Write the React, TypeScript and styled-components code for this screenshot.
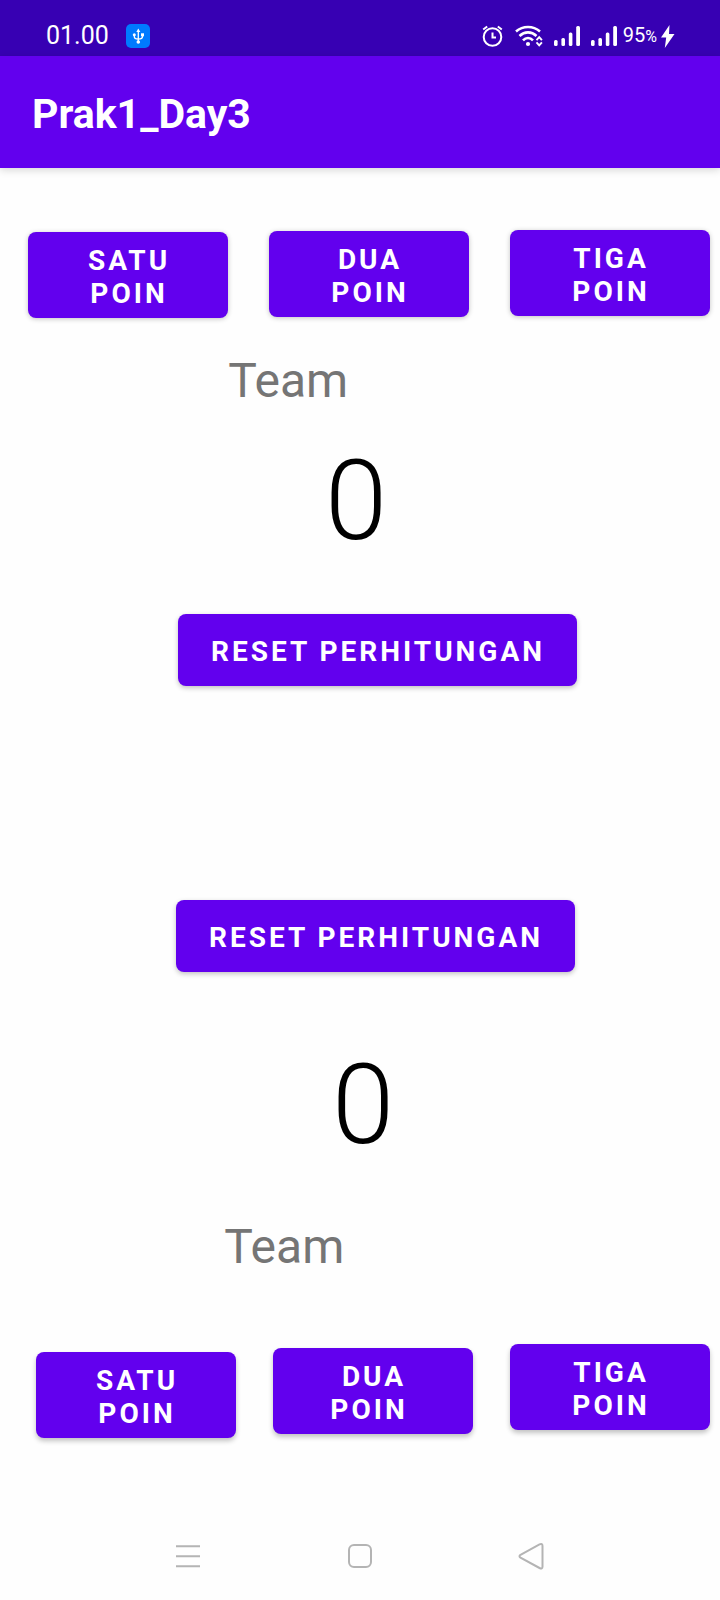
import React, { useState } from "react";
import styled, { createGlobalStyle } from "styled-components";

const GlobalStyle = createGlobalStyle`
  *, *::before, *::after { box-sizing: border-box; }
  body {
    margin: 0;
    background: #fefefe;
    font-family: Roboto, "Noto Sans", sans-serif;
  }
`;

const Screen = styled.div`
  display: flex;
  flex-direction: column;
  min-height: 100vh;
`;

const StatusBar = styled.header`
  display: flex;
  justify-content: space-between;
  align-items: center;
  height: 56px;
  padding: 16px 45px 0 46px;
  background: #3700b3;
  color: #fff;
`;

const StatusGroup = styled.div<{ $gap: number }>`
  display: flex;
  align-items: center;
  gap: ${(p) => p.$gap}px;

  svg { display: block; flex: none; }
`;

const Clock = styled.time`
  font-size: 25px;
  line-height: 32px;
`;

const Battery = styled.span`
  font-size: 20px;
  line-height: 24px;

  small { font-size: 16px; }
`;

const AppBar = styled.div`
  display: flex;
  align-items: center;
  height: 112px;
  padding: 4px 32px 0;
  background: #6200ee;
  box-shadow: 0 2px 8px rgba(0, 0, 0, 0.16);
`;

const Title = styled.h1`
  margin: 0;
  color: #fff;
  font-size: 41px;
  font-weight: 700;
  line-height: 48px;
`;

const Main = styled.main`
  flex: 1;
  padding: 62px 0 72px;
`;

const Team = styled.section`
  display: flex;
  flex-direction: column;

  & + & { margin-top: 214px; }
`;

/* Each button starts one step higher than the one to its left. */
const PointRow = styled.div<{ $start: number; $step: number; $top: number }>`
  display: flex;
  justify-content: space-between;
  align-items: flex-start;
  margin-top: ${(p) => p.$top}px;
  padding: 0 10px 0 ${(p) => p.$start}px;

  & > :nth-child(1) { margin-top: ${(p) => p.$step * 2}px; }
  & > :nth-child(2) { margin-top: ${(p) => p.$step}px; }
`;

/* Shares the free width between both sides of its child in a given ratio. */
const Biased = styled.div<{ $before: number; $after: number; $top: number }>`
  display: grid;
  grid-template-columns: ${(p) => p.$before}fr auto ${(p) => p.$after}fr;
  margin-top: ${(p) => p.$top}px;

  & > * { grid-column: 2; }
`;

const Button = styled.button<{ $depth: number }>`
  border: 0;
  border-radius: 8px;
  background: #6200ee;
  color: #fff;
  font-family: inherit;
  font-size: 28px;
  font-weight: 700;
  line-height: 33px;
  letter-spacing: 3px;
  white-space: pre;
  cursor: pointer;
  box-shadow: 0 ${(p) => p.$depth}px 5px rgba(0, 0, 0, 0.24);
`;

const PointButton = styled(Button)`
  flex: 0 1 200px;
  height: 86px;
  padding: 4px 0 0 2px;
`;

const ResetButton = styled(Button)`
  height: 72px;
  padding: 2px 32px 0 33px;
`;

const TeamName = styled.h2`
  margin: 0;
  color: #757575;
  font-size: 48px;
  font-weight: 400;
  line-height: 56px;
`;

const Score = styled.output`
  color: #000;
  font-size: 112px;
  font-weight: 300;
  line-height: 132px;
`;

const NavBar = styled.nav`
  display: flex;
  justify-content: center;
  align-items: center;
  gap: 124px;
  height: 88px;
`;

const NavButton = styled.button`
  display: grid;
  place-items: center;
  width: 48px;
  height: 48px;
  padding: 0;
  border: 0;
  background: none;
  color: #b4b4b4;
  cursor: pointer;

  svg { fill: none; stroke: currentColor; stroke-width: 2; }
`;

const UsbIcon = () => (
  <svg width="24" height="24" viewBox="0 0 24 24" aria-label="USB">
    <rect width="24" height="24" rx="5" fill="#007aff" />
    <path d="M12.300 7v11M8.300 11v1.500q0 2.500 4 2.700M16.500 11v1.500q0 2.500-4.200 2.700" fill="none" stroke="#fff" strokeWidth="1.3" />
    <path d="M12.300 4.500l2 3.500h-4z" fill="#fff" />
    <circle cx="8.300" cy="10.700" r="1.500" fill="#fff" />
    <rect x="15" y="9.300" width="3" height="3" fill="#fff" />
    <circle cx="12.300" cy="18" r="1.800" fill="#fff" />
  </svg>
);

const AlarmIcon = () => (
  <svg width="22" height="22" viewBox="0 0 22 22" fill="none" stroke="#fff" strokeWidth="2" aria-label="Alarm">
    <circle cx="10.500" cy="12" r="8.800" />
    <path d="M10.500 7.500v5h3.500M1.200 4.500l4-3M19.800 4.500l-4-3" />
  </svg>
);

const WifiIcon = () => (
  <svg width="28" height="22" viewBox="0 0 28 22" fill="none" stroke="#fff" aria-label="Wi-Fi">
    <g strokeWidth="2.6">
      <path d="M1 6.500q5.200-4.500 12-4.500t12 4.500" />
      <path d="M4.500 11q3.800-3.600 8.500-3.600t8.500 3.600" />
      <path d="M8 15.300q2.200-2.300 5-2.300t5 2.300" />
    </g>
    <circle cx="13" cy="19" r="2.100" fill="#fff" stroke="none" />
    <path d="M21.500 15.200l2.700-3 2.700 3M21.500 17.300l2.700 3 2.700-3" strokeWidth="1.900" />
  </svg>
);

const SignalIcon = () => (
  <svg width="26" height="22" viewBox="0 0 26 22" fill="#fff" aria-label="Signal">
    <rect x="0" y="15" width="3.600" height="6" rx="1.500" />
    <rect x="7.400" y="13" width="3.600" height="8" rx="1.500" />
    <rect x="14.800" y="7.500" width="3.600" height="13.500" rx="1.500" />
    <rect x="22.200" y="1" width="3.800" height="20" rx="1.500" />
  </svg>
);

const BoltIcon = () => (
  <svg width="14" height="24" viewBox="0 0 14 24" fill="#fff" aria-label="Charging">
    <path d="M8.500 1L0 13.500h5.200L3.800 24 13.500 10H8z" />
  </svg>
);

type TeamLayout = {
  id: string;
  labels: string[];
  start: number;
  step: number;
  top: number;
  depth: number;
};

const home: TeamLayout = {
  id: "Team 1",
  labels: ["SATU\nPOIN", "DUA\nPOIN", "TIGA\nPOIN"],
  start: 28,
  step: 1,
  top: 0,
  depth: 1,
};

const away: TeamLayout = {
  id: "Team 2",
  labels: ["SATU\nPOIN", "DUA\nPOIN\u00a0", "TIGA\nPOIN"],
  start: 36,
  step: 4,
  top: 69,
  depth: 3,
};

function Points({ team, onAdd }: { team: TeamLayout; onAdd: (n: number) => void }) {
  return (
    <PointRow $start={team.start} $step={team.step} $top={team.top}>
      {team.labels.map((label, i) => (
        <PointButton key={label} type="button" $depth={team.depth} onClick={() => onAdd(i + 1)}>
          {label}
        </PointButton>
      ))}
    </PointRow>
  );
}

export default function App() {
  const [first, setFirst] = useState(0);
  const [second, setSecond] = useState(0);

  return (
    <Screen>
      <GlobalStyle />
      <StatusBar>
        <StatusGroup $gap={17}>
          <Clock>01.00</Clock>
          <UsbIcon />
        </StatusGroup>
        <StatusGroup $gap={6}>
          <StatusGroup $gap={11}>
            <AlarmIcon />
            <WifiIcon />
            <SignalIcon />
            <SignalIcon />
          </StatusGroup>
          <StatusGroup $gap={4}>
            <Battery>95<small>%</small></Battery>
            <BoltIcon />
          </StatusGroup>
        </StatusGroup>
      </StatusBar>
      <AppBar>
        <Title>Prak1_Day3</Title>
      </AppBar>
      <Main>
        <Team aria-label={home.id}>
          <Points team={home} onAdd={(n) => setFirst(first + n)} />
          <Biased $before={229} $after={373} $top={35}>
            <TeamName>Team</TeamName>
          </Biased>
          <Biased $before={324} $after={332} $top={26}>
            <Score>{first}</Score>
          </Biased>
          <Biased $before={178} $after={143} $top={47}>
            <ResetButton type="button" $depth={2} onClick={() => setFirst(0)}>
              RESET PERHITUNGAN
            </ResetButton>
          </Biased>
        </Team>
        <Team aria-label={away.id}>
          <Biased $before={176} $after={145} $top={0}>
            <ResetButton type="button" $depth={2} onClick={() => setSecond(0)}>
              RESET PERHITUNGAN
            </ResetButton>
          </Biased>
          <Biased $before={331} $after={325} $top={67}>
            <Score>{second}</Score>
          </Biased>
          <Biased $before={225} $after={377} $top={48}>
            <TeamName>Team</TeamName>
          </Biased>
          <Points team={away} onAdd={(n) => setSecond(second + n)} />
        </Team>
      </Main>
      <NavBar>
        <NavButton type="button" aria-label="Menu">
          <svg width="26" height="26" viewBox="0 0 26 26"><path d="M1 3.300h24M1 13.300h24M1 23.300h24" /></svg>
        </NavButton>
        <NavButton type="button" aria-label="Home">
          <svg width="26" height="26" viewBox="0 0 26 26"><rect x="2" y="2" width="22" height="22" rx="5" /></svg>
        </NavButton>
        <NavButton type="button" aria-label="Back">
          <svg width="28" height="28" viewBox="1 0 28 28">
            <path d="M3.500 12.800L22.500 2.300Q25.500 1 25.500 4V24.500Q25.500 27.500 22.500 26L3.500 15.600Q1.500 14.200 3.500 12.800Z" />
          </svg>
        </NavButton>
      </NavBar>
    </Screen>
  );
}
